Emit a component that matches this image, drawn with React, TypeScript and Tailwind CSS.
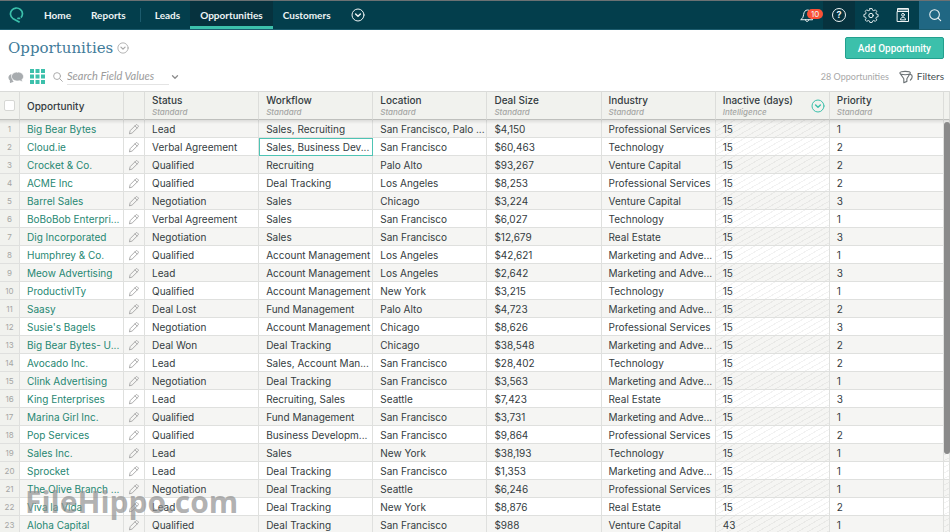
import type { ReactNode } from "react";

type Row = [string, string, string, string, string, string, string, string];

const rows: Row[] = [
  ["Big Bear Bytes", "Lead", "Sales, Recruiting", "San Francisco, Palo ...", "$4,150", "Professional Services", "15", "1"],
  ["Cloud.ie", "Verbal Agreement", "Sales, Business Dev...", "San Francisco", "$60,463", "Technology", "15", "2"],
  ["Crocket & Co.", "Qualified", "Recruiting", "Palo Alto", "$93,267", "Venture Capital", "15", "2"],
  ["ACME Inc", "Qualified", "Deal Tracking", "Los Angeles", "$8,253", "Professional Services", "15", "2"],
  ["Barrel Sales", "Negotiation", "Sales", "Chicago", "$3,224", "Venture Capital", "15", "3"],
  ["BoBoBob Enterpri...", "Verbal Agreement", "Sales", "San Francisco", "$6,027", "Technology", "15", "1"],
  ["Dig Incorporated", "Negotiation", "Sales", "San Francisco", "$12,679", "Real Estate", "15", "3"],
  ["Humphrey & Co.", "Qualified", "Account Management", "Los Angeles", "$42,621", "Marketing and Adve...", "15", "1"],
  ["Meow Advertising", "Lead", "Account Management", "Los Angeles", "$2,642", "Marketing and Adve...", "15", "3"],
  ["ProductivITy", "Qualified", "Account Management", "New York", "$3,215", "Technology", "15", "1"],
  ["Saasy", "Deal Lost", "Fund Management", "Palo Alto", "$4,723", "Marketing and Adve...", "15", "2"],
  ["Susie's Bagels", "Negotiation", "Account Management", "Chicago", "$8,626", "Professional Services", "15", "3"],
  ["Big Bear Bytes- U...", "Deal Won", "Deal Tracking", "Chicago", "$38,548", "Marketing and Adve...", "15", "2"],
  ["Avocado Inc.", "Lead", "Sales, Account Man...", "San Francisco", "$28,402", "Technology", "15", "2"],
  ["Clink Advertising", "Negotiation", "Deal Tracking", "San Francisco", "$3,563", "Marketing and Adve...", "15", "1"],
  ["King Enterprises", "Lead", "Recruiting, Sales", "Seattle", "$7,423", "Real Estate", "15", "3"],
  ["Marina Girl Inc.", "Qualified", "Fund Management", "San Francisco", "$3,731", "Marketing and Adve...", "15", "1"],
  ["Pop Services", "Qualified", "Business Developm...", "San Francisco", "$9,864", "Professional Services", "15", "2"],
  ["Sales Inc.", "Lead", "Sales", "New York", "$38,193", "Technology", "15", "1"],
  ["Sprocket", "Lead", "Deal Tracking", "San Francisco", "$1,353", "Marketing and Adve...", "15", "1"],
  ["The Olive Branch ...", "Negotiation", "Deal Tracking", "Seattle", "$6,246", "Professional Services", "15", "1"],
  ["Viva la Vida", "Lead", "Deal Tracking", "New York", "$8,876", "Real Estate", "15", "2"],
  ["Aloha Capital", "Qualified", "Deal Tracking", "San Francisco", "$988", "Venture Capital", "43", "1"],
];

const fields = [
  { name: "Status", kind: "Standard" },
  { name: "Workflow", kind: "Standard" },
  { name: "Location", kind: "Standard" },
  { name: "Deal Size", kind: "Standard" },
  { name: "Industry", kind: "Standard" },
  { name: "Inactive (days)", kind: "Intelligence" },
  { name: "Priority", kind: "Standard" },
];

const hatch =
  "bg-[repeating-linear-gradient(150deg,transparent_0px,transparent_4px,rgba(0,0,0,0.05)_4px,rgba(0,0,0,0.05)_5px)]";

function Icon({ className, children, box = 16 }: { className: string; children: ReactNode; box?: number }) {
  return (
    <svg
      viewBox={`0 0 ${box} ${box}`}
      fill="none"
      stroke="currentColor"
      strokeLinecap="round"
      strokeLinejoin="round"
      className={`shrink-0 ${className}`}
      aria-hidden="true"
    >
      {children}
    </svg>
  );
}

function CircleChevron({ className }: { className: string }) {
  return (
    <Icon className={className} box={14}>
      <circle cx="7" cy="7" r="6" strokeWidth="1" />
      <path d="M4.6 6 7 8.3 9.4 6" strokeWidth="1.5" />
    </Icon>
  );
}

function Pencil() {
  return (
    <Icon className="size-3 text-[#a3a3a3]" box={12}>
      <path d="M1.5 10.5 2.2 7.6 7.9 1.9a1 1 0 0 1 1.4 0l.8.8a1 1 0 0 1 0 1.4L4.4 9.8z M7 2.9l2.1 2.1" strokeWidth="0.9" />
    </Icon>
  );
}

function NavLink({ children, active = false }: { children: ReactNode; active?: boolean }) {
  return (
    <a
      href="#"
      className={
        active
          ? "flex h-full items-center border-b-3 border-[#3cc0ab] bg-[#06323e] px-2.5 pt-1"
          : "flex h-full items-center px-2.5"
      }
    >
      {children}
    </a>
  );
}

function TopBar() {
  return (
    <header className="flex h-[30px] shrink-0 items-stretch border-t border-b border-t-[#6b7173] border-b-[#1c5b6d] bg-[#033e4c] text-[#eef4f5]">
      <a href="#" aria-label="Home page" className="flex items-center pl-2">
        <Icon className="size-4 text-[#3cc0ab]">
          <path d="M11.600 15.200 4.800 11.400A6 5.800 0 1 1 13 10.600" strokeWidth="1.700" strokeLinecap="butt" />
          <path d="M10 11.400h1.500" strokeWidth="1.800" />
        </Icon>
      </a>
      <nav className="flex items-center pl-2.5 font-['Lato',sans-serif] text-[10px] font-bold">
        <NavLink>Home</NavLink>
        <NavLink>Reports</NavLink>
        <span className="mx-1 h-3.5 w-px bg-[#1c5b6d]" />
        <NavLink>Leads</NavLink>
        <NavLink active>Opportunities</NavLink>
        <NavLink>Customers</NavLink>
        <button type="button" aria-label="More" className="ml-2.5">
          <CircleChevron className="size-3.5" />
        </button>
      </nav>
      <div className="ml-auto flex items-stretch">
        <button type="button" aria-label="Notifications" className="relative flex w-8 items-center justify-center">
          <Icon className="size-4">
            <path d="M2 12.5c1.800-1.200 2.200-2.600 2.600-5C5 4.800 6.300 3 8.600 3c2.400 0 3.600 1.800 3.400 4.300-.2 2.300.2 3.900 1.400 5.200z M6.500 12.700c.1 1.200.8 1.800 1.600 1.800s1.500-.6 1.700-1.800" strokeWidth="1" />
          </Icon>
          <span className="absolute top-2 left-4 rounded-full bg-[#fb5136] px-1 text-[8px] leading-[10px]">10</span>
        </button>
        <button type="button" aria-label="Help" className="flex w-8 items-center justify-center bg-[#06323e]">
          <span className="flex size-3.5 items-center justify-center rounded-full border border-current text-[9px] font-bold">?</span>
        </button>
        <button type="button" aria-label="Settings" className="flex w-8 items-center justify-center">
          <Icon className="size-4">
            <circle cx="8" cy="8.500" r="2.200" />
            <path d="M6.900 1.500h2.200l.4 1.700 1.300.5 1.500-.9 1.500 1.500-.9 1.500.5 1.300 1.700.4v2.200l-1.700.4-.5 1.300.9 1.500-1.500 1.500-1.500-.9-1.300.5-.4 1.500H6.900l-.4-1.500-1.300-.5-1.500.9-1.500-1.500.9-1.500-.5-1.300L.9 9.700V7.500l1.700-.4.5-1.300-.9-1.500 1.500-1.500 1.500.9 1.300-.5z" strokeWidth="0.900" />
          </Icon>
        </button>
        <button type="button" aria-label="Contacts" className="flex w-8 items-center justify-center">
          <Icon className="size-4">
            <path d="M2.500 4.500h11v10h-11z M2.500 4.500v-3h11v3 M3 2.800h10" strokeWidth="1" />
            <circle cx="8" cy="7.800" r="1.400" />
            <path d="M5.500 12.500c0-3.200 5-3.200 5 0z" />
          </Icon>
        </button>
        <button type="button" aria-label="Search" className="flex w-[31px] items-center justify-center bg-[#206783]">
          <Icon className="size-3.5">
            <circle cx="7.500" cy="7.500" r="5.500" strokeWidth="1.200" />
            <path d="m11.500 11.500 3 3" strokeWidth="1.200" />
          </Icon>
        </button>
      </div>
    </header>
  );
}

function Toolbar() {
  return (
    <section className="shrink-0 bg-white font-['Lato',sans-serif]">
      <div className="flex h-9 items-center justify-between pr-1.5 pl-2">
        <div className="flex items-center gap-1">
          <h1 className="font-['DejaVu_Serif',serif] text-[15px] text-[#3f7b99]">Opportunities</h1>
          <button type="button" aria-label="Choose list">
            <CircleChevron className="size-3 text-[#a8a8a8]" />
          </button>
        </div>
        <button type="button" className="h-[22px] rounded-xs border border-[#23a08e] bg-[#3cc0ab] px-3 font-['Roboto',sans-serif] text-[10px] font-medium text-white">
          Add Opportunity
        </button>
      </div>
      <div className="flex h-[25px] items-center pr-1.5 pb-1 pl-2">
        <button type="button" aria-label="Comments">
          <Icon className="size-4 text-[#a8acaf]">
            <path d="M5 12.500c-1 .2-1.700 0-2.500.8L2.400 11C1.300 10.200.8 9 1.200 7.700c.3-1 1-1.500 1.900-1.900" strokeWidth="1.200" fill="currentColor" />
            <path d="M9.500 3c3.500 0 6 1.900 6 4.500 0 1.300-.6 2.300-1.500 3.100l.4 2.400-2.500-1.300c-.7.200-1.500.3-2.400.3-3.500 0-6-1.900-6-4.500S6 3 9.500 3z" fill="currentColor" stroke="white" strokeWidth="0.700" />
          </Icon>
        </button>
        <button type="button" aria-label="Grid view" className="ml-1.5">
          <svg viewBox="0 0 15 15" className="size-[15px] fill-[#3cc0ab]" aria-hidden="true">
            <path d="M0 0h4v4H0zM5.500 0h4v4h-4zM11 0h4v4h-4zM0 5.500h4v4H0zM5.500 5.500h4v4h-4zM11 5.500h4v4h-4zM0 11h4v4H0zM5.500 11h4v4h-4zM11 11h4v4h-4z" />
          </svg>
        </button>
        <label htmlFor="search" aria-label="Search field values" className="ml-2">
          <Icon className="size-2.5 text-[#a8a8a8]">
            <circle cx="6.500" cy="6.500" r="5.500" strokeWidth="1.500" />
            <path d="m11 11 4 4" strokeWidth="1.500" />
          </Icon>
        </label>
        <input
          id="search"
          type="text"
          placeholder="Search Field Values"
          className="ml-1 h-4 w-[102px] border-b border-[#e4e4e4] text-[11px] italic outline-none placeholder:text-[#9b9b9b]"
        />
        <button type="button" aria-label="Search options" className="ml-0.5">
          <Icon className="size-2 text-[#8d8d8d]" box={8}>
            <path d="M1.500 2.800 4 5.200 6.500 2.800" strokeWidth="1.300" />
          </Icon>
        </button>
        <span className="ml-auto text-[9px] text-[#a8a8a8]">28 Opportunities</span>
        <button type="button" className="ml-2.5 flex items-center gap-1 text-[10px] text-[#464e52]">
          <Icon className="size-3.5 text-[#6c7376]">
            <path d="M1 3.500C1 1 13 1 13 3.500S1 6 1 3.500zl4.500 6.500v4.500l3.500-1.500v-3L13 3.500M13 5c3 .5 2.500 4.500 0 6.500" strokeWidth="1.300" />
          </Icon>
          Filters
        </button>
      </div>
    </section>
  );
}

function Grid() {
  return (
    <div className="relative min-h-0 flex-1 overflow-hidden">
      <table className="w-full table-fixed border-separate border-spacing-0 text-left text-[10px] leading-3 text-[#343c41]">
        <colgroup>
          <col className="w-5" />
          <col className="w-[104px]" />
          <col className="w-[21px]" />
          {fields.map((f) => (
            <col key={f.name} />
          ))}
          <col className="w-1.5" />
        </colgroup>
        <thead>
          <tr className="h-[29px] bg-[#f1f2ee] *:border-t *:border-r *:border-b *:border-t-[#d9dad8] *:border-r-[#dcddda] *:border-b-[#bfc0bd] *:p-0 *:font-medium">
            <th>
              <input
                type="checkbox"
                aria-label="Select all"
                className="mx-auto block size-[11px] appearance-none rounded-xs border border-[#d6d7d4] bg-white"
              />
            </th>
            <th>
              <span className="pl-[7px]">Opportunity</span>
            </th>
            <th aria-label="Edit" />
            {fields.map((f) => (
              <th key={f.name}>
                <div className="flex items-center justify-between pr-1 pl-[7px]">
                  <div>
                    <div>{f.name}</div>
                    <div className="text-[8px] leading-3 text-[#a5a6a4] italic">{f.kind}</div>
                  </div>
                  {f.kind === "Intelligence" && (
                    <button type="button" aria-label="Column options">
                      <CircleChevron className="size-3.5 text-[#3cc0ab]" />
                    </button>
                  )}
                </div>
              </th>
            ))}
            <th aria-label="Spacer" />
          </tr>
        </thead>
        <tbody>
          {rows.map(([name, ...cells], r) => (
            <tr
              key={name}
              className="h-[18px] odd:bg-[#f5f5f3] even:bg-white *:border-r *:border-b *:border-[#dfe0de] *:py-0"
            >
              <td className="bg-[#f1f2ee] px-0 text-center text-[8px] text-[#a5a6a4]">{r + 1}</td>
              <td className="pr-0 pl-[7px] whitespace-nowrap">
                <a href="#" className="text-[#1f8772]">
                  {name}
                </a>
              </td>
              <td className="px-1">
                <button type="button" aria-label={`Edit ${name}`} className="block">
                  <Pencil />
                </button>
              </td>
              {cells.map((c, i) => (
                <td
                  key={fields[i].name}
                  className={`pr-0 pl-[7px] whitespace-nowrap ${i === 5 ? hatch : ""} ${r === 1 && i === 1 ? "outline -outline-offset-1 outline-[#4fc4b4]" : ""}`}
                >
                  {c}
                </td>
              ))}
              <td className={`px-0 ${hatch}`} />
            </tr>
          ))}
        </tbody>
      </table>
      <div className="absolute inset-x-0 top-[29px] h-1 bg-linear-to-b from-black/10 to-transparent" />
      <div className="absolute top-[31px] right-0 h-[332px] w-1.5 rounded-full bg-[#8a8a8a]" />
      <div className="absolute top-[393px] left-[25px] font-['Open_Sans',sans-serif] text-[30px] leading-9 font-bold text-[#8f8f8f]/70">
        FileHippo.com
      </div>
    </div>
  );
}

export default function App() {
  return (
    <main className="flex h-screen flex-col overflow-hidden bg-white font-['Inter',sans-serif]">
      <TopBar />
      <Toolbar />
      <Grid />
    </main>
  );
}
